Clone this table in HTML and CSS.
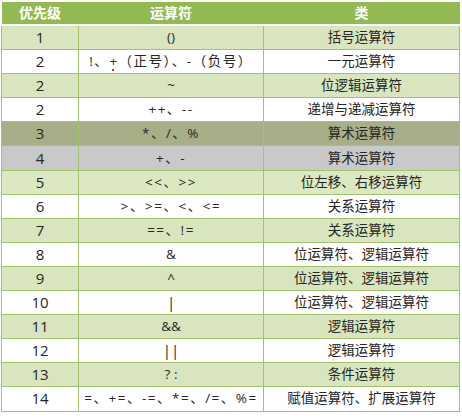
FILE: index.html
```html
<!DOCTYPE html>
<html lang="zh">
<head>
<meta charset="utf-8">
<title>运算符优先级</title>
<link rel="stylesheet" href="styles.css">
</head>
<body>
<table class="prec">
  <colgroup><col class="c1"><col class="c2"><col class="c3"></colgroup>
  <thead>
    <tr><th>优先级</th><th>运算符</th><th>类</th></tr>
  </thead>
  <tbody>
    <tr class="g"><td class="lvl">1</td><td>()</td><td>括号运算符</td></tr>
    <tr class="w"><td class="lvl">2</td><td class="ops">!、<span class="mark">+</span>（正号）、-（负号）</td><td>一元运算符</td></tr>
    <tr class="g"><td class="lvl">2</td><td>~</td><td>位逻辑运算符</td></tr>
    <tr class="w"><td class="lvl">2</td><td class="ops">++、--</td><td>递增与递减运算符</td></tr>
    <tr class="olive"><td class="lvl">3</td><td class="ops">*、/、%</td><td>算术运算符</td></tr>
    <tr class="gray"><td class="lvl">4</td><td class="ops">+、-</td><td>算术运算符</td></tr>
    <tr class="lg"><td class="lvl">5</td><td class="ops">&lt;&lt;、&gt;&gt;</td><td>位左移、右移运算符</td></tr>
    <tr class="w"><td class="lvl">6</td><td class="ops">&gt;、&gt;=、&lt;、&lt;=</td><td>关系运算符</td></tr>
    <tr class="g"><td class="lvl">7</td><td class="ops">==、!=</td><td>关系运算符</td></tr>
    <tr class="w"><td class="lvl">8</td><td>&amp;</td><td>位运算符、逻辑运算符</td></tr>
    <tr class="g"><td class="lvl">9</td><td>^</td><td>位运算符、逻辑运算符</td></tr>
    <tr class="w"><td class="lvl">10</td><td class="bar">|</td><td>位运算符、逻辑运算符</td></tr>
    <tr class="g"><td class="lvl">11</td><td>&amp;&amp;</td><td>逻辑运算符</td></tr>
    <tr class="w"><td class="lvl">12</td><td class="bar">||</td><td>逻辑运算符</td></tr>
    <tr class="g"><td class="lvl">13</td><td>? :</td><td>条件运算符</td></tr>
    <tr class="w"><td class="lvl">14</td><td class="ops">=、+=、-=、*=、/=、%=</td><td>赋值运算符、扩展运算符</td></tr>
  </tbody>
</table>
</body>
</html>
```
FILE: styles.css
```css
html, body {
  margin: 0;
  padding: 0;
  background: #ffffff;
}
body {
  padding: 2px 3px 0 1px;
  font-family: "Open Sans", "Noto Sans CJK SC", sans-serif;
  color: #262626;
}
.prec {
  width: 458px;
  border-collapse: collapse;
  table-layout: fixed;
  font-size: 13.5px;
}
.c1 { width: 77px; }
.c2 { width: 185px; }
.c3 { width: 196px; }
.prec th {
  background: #93ba52;
  color: #ffffff;
  font-weight: bold;
  font-size: 14px;
  height: 22px;
  padding: 0;
  border-bottom: 2px solid #ffffff;
  line-height: 22px;
}
.prec td {
  height: 23.1px;
  padding: 0;
  text-align: center;
  line-height: 23px;
  border: 1px solid #a3c36a;
  white-space: nowrap;
}
.prec td.lvl { font-size: 15px; }
.prec tbody tr:first-child td { border-top: none; }
.g td { background: #d8e5be; }
.w td { background: #ffffff; }
.olive td { background: #a8ae88; }
.gray td { background: #c9c9c9; }
.lg td { background: #dce8c2; }
.ops { letter-spacing: 1.5px; }
.bar { font-size: 15px; }
.mark {
  position: relative;
}
.mark::after {
  content: "";
  position: absolute;
  left: 3px;
  top: 17px;
  width: 2px;
  height: 2px;
  background: #d23030;
}
```
